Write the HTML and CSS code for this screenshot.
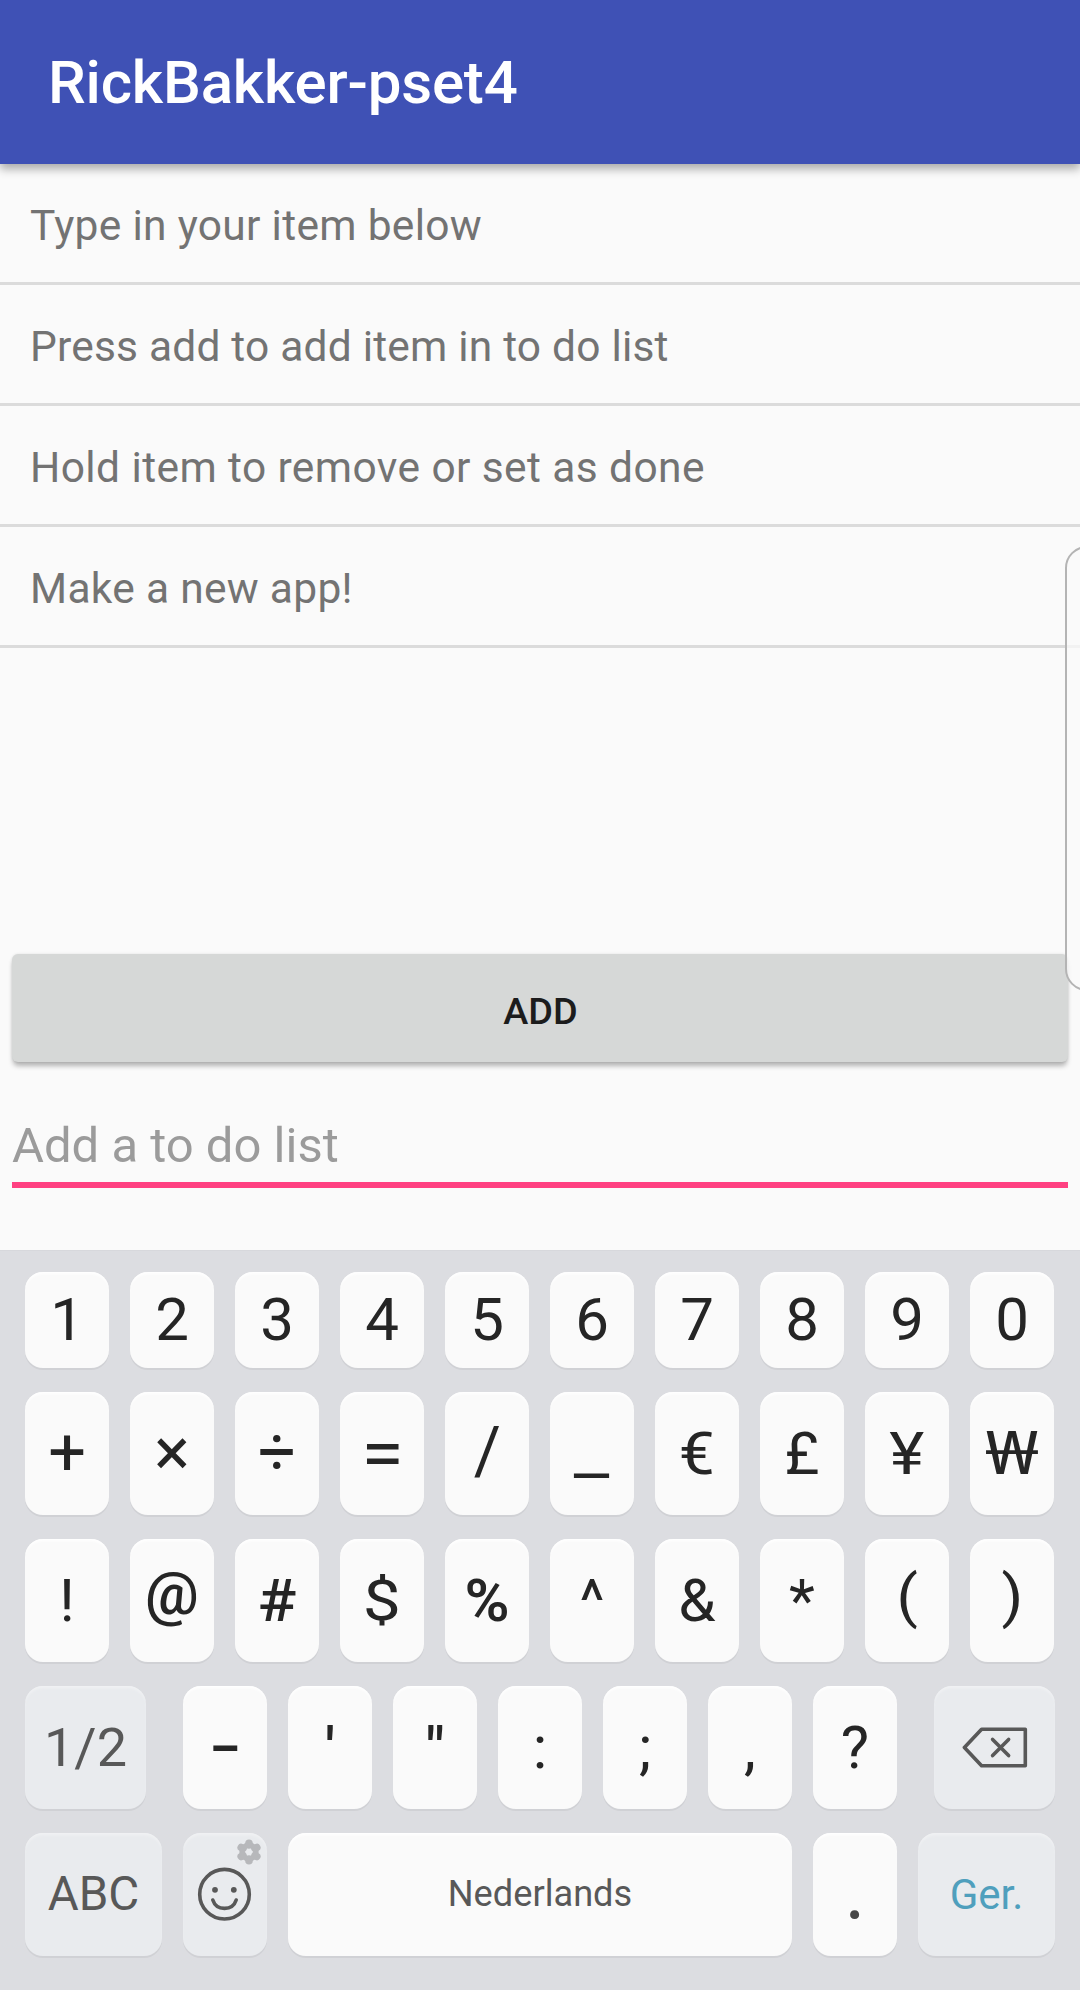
FILE: index.html
```html
<!DOCTYPE html>
<html lang="en">
<head>
<meta charset="utf-8">
<title>RickBakker-pset4</title>
<link rel="stylesheet" href="styles.css">
</head>
<body>
<header class="app-bar"><h1 class="app-title">RickBakker-pset4</h1></header>
<main class="content">
  <ul class="todo-list">
    <li class="todo-item">Type in your item below</li>
    <li class="todo-item todo-item-tight">Press add to add item in to do list</li>
    <li class="todo-item todo-item-loose">Hold item to remove or set as done</li>
    <li class="todo-item">Make a new app!</li>
  </ul>
  <button class="add-button">ADD</button>
  <input class="todo-input" type="text" placeholder="Add a to do list">
</main>
<section class="keyboard">
  <div class="key-row key-row-digits">
    <div class="key">1</div><div class="key">2</div><div class="key">3</div><div class="key">4</div><div class="key">5</div><div class="key">6</div><div class="key">7</div><div class="key">8</div><div class="key">9</div><div class="key">0</div>
  </div>
  <div class="key-row">
    <div class="key"><span class="glyph-operator">+</span></div>
    <div class="key"><span class="glyph-operator">×</span></div>
    <div class="key"><span class="glyph-operator">÷</span></div>
    <div class="key"><span class="glyph-equals">=</span></div>
    <div class="key"><span class="glyph-slash">/</span></div>
    <div class="key"><span class="glyph-underscore">_</span></div>
    <div class="key"><span class="glyph-wide">€</span></div>
    <div class="key">£</div>
    <div class="key"><span class="glyph-yen">¥</span></div>
    <div class="key"><span class="glyph-won">₩</span></div>
  </div>
  <div class="key-row">
    <div class="key">!</div>
    <div class="key"><span class="glyph-at">@</span></div>
    <div class="key"><span class="glyph-wide glyph-medium">#</span></div>
    <div class="key"><span class="glyph-dollar">$</span></div>
    <div class="key"><span class="glyph-percent">%</span></div>
    <div class="key">^</div>
    <div class="key">&amp;</div>
    <div class="key">*</div>
    <div class="key"><span class="glyph-paren">(</span></div>
    <div class="key"><span class="glyph-paren">)</span></div>
  </div>
  <div class="key-row key-row-spread">
    <div class="key key-function key-page">1/2</div>
    <div class="key-group">
      <div class="key"><span class="glyph-hyphen">-</span></div>
      <div class="key"><span class="glyph-quote">'</span></div>
      <div class="key"><span class="glyph-quote">"</span></div>
      <div class="key">:</div>
      <div class="key">;</div>
      <div class="key">,</div>
      <div class="key">?</div>
    </div>
    <div class="key key-function key-page">
      <svg class="icon-backspace" width="68" height="44" viewBox="0 0 68 44" fill="none" stroke="#585858" stroke-width="3.6" stroke-linecap="round" stroke-linejoin="round">
        <path d="M20.6 3.2H64.3V39.8H20.6L3.4 21.5Z"/>
        <path d="M31.6 13.4 47.6 29.6M47.6 13.4 31.6 29.6"/>
      </svg>
    </div>
  </div>
  <div class="key-row">
    <div class="key key-function key-abc">ABC</div>
    <div class="key key-function key-emoji">
      <svg width="56" height="56" viewBox="0 0 56 56" fill="none" stroke="#585858" stroke-width="3.6" stroke-linecap="round">
        <circle cx="27.5" cy="27.2" r="24.8"/>
        <path d="M15.8 33C17.6 38.6 22.2 41.4 27.5 41.4S37.4 38.6 39.2 33"/>
        <g fill="#585858" stroke="none"><circle cx="18" cy="22.8" r="2.9"/><circle cx="36.8" cy="22.8" r="2.9"/></g>
      </svg>
      <svg class="icon-gear" width="26" height="26" viewBox="-13 -13 26 26">
        <g stroke="#b7b8bb" stroke-width="7.6" stroke-linecap="round">
          <path d="M0-8.8V-7M0 8.8V7M7.8-4.5 6-3.5M-7.8 4.5-6 3.5M7.8 4.5 6 3.5M-7.8-4.5-6-3.5"/>
        </g>
        <circle r="7.1" fill="none" stroke="#b7b8bb" stroke-width="5.2"/>
      </svg>
    </div>
    <div class="key key-space">Nederlands</div>
    <div class="key key-period">.</div>
    <div class="key key-function key-enter">Ger.</div>
  </div>
</section>
<div class="edge-handle"></div>
</body>
</html>
```
FILE: styles.css
```css
* { box-sizing: border-box; }
body {
  margin: 0;
  width: 1080px;
  height: 1990px;
  position: relative;
  display: flex;
  flex-direction: column;
  overflow: hidden;
  background: #fafafa;
  font-family: Roboto, "Liberation Sans", sans-serif;
}
.app-bar {
  height: 164px;
  padding-left: 48px;
  display: flex;
  align-items: center;
  background: #3f51b5;
  box-shadow: 0 5px 9px rgba(0, 0, 0, .32);
}
.app-title {
  margin: 0;
  font-size: 60px;
  font-weight: 500;
  letter-spacing: -.18px;
  color: #fff;
}
.content {
  height: 1086px;
  display: flex;
  flex-direction: column;
}
.todo-list {
  margin: 0;
  padding: 0;
  height: 790px;
  list-style: none;
}
.todo-item {
  height: 121px;
  padding: 5px 30px 0;
  border-bottom: 3px solid #dbdbdb;
  display: flex;
  align-items: center;
  font-size: 42.5px;
  letter-spacing: .3px;
  color: #737373;
}
.todo-item-tight { letter-spacing: .2px; }
.todo-item-loose { letter-spacing: .4px; }
.add-button {
  height: 108px;
  margin: 0 12px;
  padding: 5px 0 0 1px;
  border: 0;
  border-radius: 6px;
  background: #d6d8d7;
  box-shadow: 0 5px 5px -1px rgba(0, 0, 0, .28), 0 0 3px rgba(0, 0, 0, .1);
  font: 500 37.8px Roboto, "Liberation Sans", sans-serif;
  color: #1c1c1c;
}
.todo-input {
  height: 86px;
  margin: 40px 12px 0;
  padding: 6px 0 0;
  border: 0;
  border-bottom: 6px solid #ff4081;
  outline: 0;
  background: none;
  font: 49px Roboto, "Liberation Sans", sans-serif;
}
.todo-input::placeholder { color: #9b9b9b; opacity: 1; }

.keyboard {
  flex: 1;
  padding: 21px 25px 34px;
  border-top: 1px solid #d7d8dc;
  display: flex;
  flex-direction: column;
  gap: 24px;
  background: #dcdde1;
}
.key-row { display: flex; gap: 21px; height: 123px; }
.key-row-digits { height: 96px; }
.key-row-spread { gap: 37px; }
.key-group { display: flex; gap: 21px; }
.key {
  width: 84px;
  height: 100%;
  flex: none;
  display: flex;
  align-items: center;
  justify-content: center;
  border-radius: 18px;
  background: #fafafa;
  box-shadow: 0 2px 0 #d0d1d5, inset 0 3px 3px -1px #fff;
  font-size: 60px;
  line-height: 1;
  color: #252525;
}
.key-function {
  background: #e9ebee;
  box-shadow: 0 2px 0 #d0d1d5, inset 0 3px 3px -1px #f1f2f4;
  color: #585858;
}
.key-page { width: 121px; font-size: 54px; }
.key-abc { width: 137px; font-size: 47.5px; }
.key-emoji { position: relative; }
.icon-gear { position: absolute; top: 6px; right: 5px; }
.key-space { width: 504px; font-size: 36.2px; color: #585858; }
.key-period { padding-bottom: 5px; font-size: 80px; color: #464646; }
.key-enter { width: 137px; font-size: 42px; color: #4f9fbd; }

/* Per-symbol optical adjustments on the key caps */
.glyph-medium { font-weight: 500; }
.glyph-operator { transform: translateY(-1px) scale(1.11); }
.glyph-equals { transform: scale(1.29, 1.18); }
.glyph-slash { transform: translateY(-2px) scale(1.1); }
.glyph-underscore { transform: scaleX(1.31); }
.glyph-wide { transform: scaleX(1.07); }
.glyph-yen { transform: scaleX(1.11); }
.glyph-won { font-family: "Noto Sans", sans-serif; transform: translateY(-3px) scaleX(1.33); }
.glyph-at { font-weight: 500; transform: translateY(-7px); }
.glyph-dollar { transform: scale(1.13, .93); }
.glyph-percent { font-weight: 600; transform: scaleX(1.02); }
.glyph-paren { transform: translateY(-4px) scale(1.04, .955); }
.glyph-quote { font-weight: 500; transform: translateY(2px); }
.glyph-hyphen { transform: translateY(-2px) scale(1.67, 1.25); }

.edge-handle {
  position: absolute;
  top: 546px;
  right: -12px;
  width: 27px;
  height: 445px;
  border: 2px solid #b4b4b4;
  border-radius: 22px 0 0 22px;
  background: rgba(250, 250, 250, .75);
}
```
